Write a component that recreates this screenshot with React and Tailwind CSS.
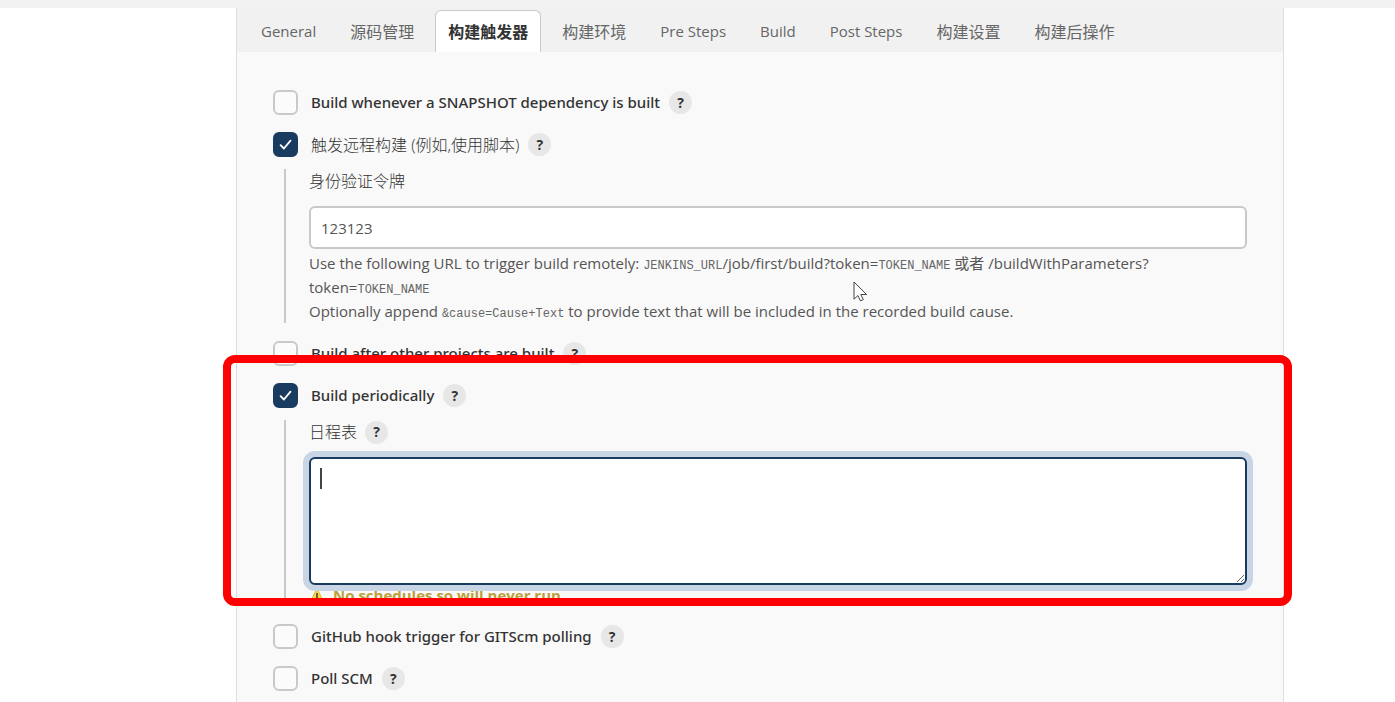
import React, { useState } from "react";

const tabs = [
  "General",
  "源码管理",
  "构建触发器",
  "构建环境",
  "Pre Steps",
  "Build",
  "Post Steps",
  "构建设置",
  "构建后操作",
];

const HelpButton = ({ label }) => (
  <button
    type="button"
    aria-label={`Help for ${label}`}
    className="w-[23px] h-[23px] rounded-full bg-[#e7e7e7] text-[#333] text-sm leading-none font-bold flex items-center justify-center"
  >
    ?
  </button>
);

const Trigger = ({ id, label, cjk, defaultChecked = false, children }) => {
  const [checked, setChecked] = useState(defaultChecked);

  return (
    <div>
      <div className="flex items-center h-[25px]">
        <span className="relative flex w-[25px] h-[25px]">
          <input
            id={id}
            type="checkbox"
            checked={checked}
            onChange={(e) => setChecked(e.target.checked)}
            className="appearance-none w-[25px] h-[25px] rounded-md border-2 border-[#c9c9c9] bg-[#fbfbfb] checked:bg-[#193b60] checked:border-[#193b60]"
          />
          {checked && (
            <svg
              viewBox="0 0 25 25"
              className="absolute inset-0 pointer-events-none"
              fill="none"
              stroke="#fff"
              strokeWidth="1.8"
              strokeLinecap="round"
              strokeLinejoin="round"
            >
              <path d="M7.6 13.2l3.3 3.3 6.6-7.9" />
            </svg>
          )}
        </span>
        <label
          htmlFor={id}
          className={
            "ml-[13px] mr-[9px] whitespace-nowrap " +
            (cjk
              ? "text-base font-light text-[#333]"
              : "font-['Noto_Sans','Open_Sans',sans-serif] text-[15px] font-medium text-[#333]")
          }
        >
          {label}
        </label>
        <HelpButton label={label} />
      </div>
      {checked && children && (
        <div className="mt-3 mb-px ml-[11px] pl-[23px] border-l-2 border-[#c9c9c9]">
          {children}
        </div>
      )}
    </div>
  );
};

const Code = ({ children }) => (
  <code className="font-['Liberation_Mono','Noto_Sans_CJK_SC',monospace] text-xs text-[#666]">
    {children}
  </code>
);

const App = () => {
  const [activeTab, setActiveTab] = useState("构建触发器");
  const [token, setToken] = useState("123123");

  return (
    <div className="relative min-h-screen overflow-hidden bg-white font-['Open_Sans','Noto_Sans_CJK_SC',sans-serif]">
      <div className="h-2 bg-[#f2f2f2]" />

      <main className="ml-[236px] mr-[111px] min-h-[calc(100vh-8px)] bg-[#f9f9f9] border-x border-[#dedede]">
        {/* Tabs */}
        <nav className="flex gap-2 h-11 pl-[11px] pt-0.5 bg-[#f1f1f1]">
          {tabs.map((tab) => (
            <button
              key={tab}
              type="button"
              onClick={() => setActiveTab(tab)}
              className={
                "px-3 border border-b-0 rounded-t-md whitespace-nowrap " +
                (/^[A-Z]/.test(tab) ? "text-[15px] " : "text-base ") +
                (activeTab === tab
                  ? "bg-white border-[#c9c9c9] text-[#333] font-bold"
                  : "border-transparent text-[#666]")
              }
            >
              {tab}
            </button>
          ))}
        </nav>

        {/* Build triggers */}
        <form className="flex flex-col gap-[17px] px-9 pt-[38px]">
          <Trigger id="snapshot" label="Build whenever a SNAPSHOT dependency is built" />

          <Trigger id="remote" label="触发远程构建 (例如,使用脚本)" cjk defaultChecked>
            <label
              htmlFor="token"
              className="block h-6 leading-6 text-base font-light text-[#333]"
            >
              身份验证令牌
            </label>
            <input
              id="token"
              type="text"
              value={token}
              onChange={(e) => setToken(e.target.value)}
              className="block mt-[13px] w-full h-[43px] px-[10px] rounded-md border-2 border-[#c9c9c9] bg-white text-[15px] text-[#555]"
            />
            <div className="mt-0.5 pr-20 text-[15px] leading-6 text-[#555]">
              <p>
                Use the following URL to trigger build remotely: <Code>JENKINS_URL</Code>
                /job/first/build?token=<Code>TOKEN_NAME</Code> 或者 /buildWithParameters?
                <wbr />
                token=<Code>TOKEN_NAME</Code>
              </p>
              <p>
                Optionally append <Code>&amp;cause=Cause+Text</Code> to provide text that
                will be included in the recorded build cause.
              </p>
            </div>
          </Trigger>

          <Trigger id="after" label="Build after other projects are built" />

          <Trigger id="periodic" label="Build periodically" defaultChecked>
            <div className="flex items-center gap-2 h-6">
              <label htmlFor="schedule" className="text-base font-light text-[#333]">
                日程表
              </label>
              <HelpButton label="日程表" />
            </div>
            <div className="relative mt-[13px]">
              <textarea
                id="schedule"
                className="block w-full h-32 px-[10px] py-2 rounded-md border-2 border-[#193b60] bg-white text-[15px] text-[#555] resize-y outline-none shadow-[0_0_0_6px_#c8d5e4]"
              />
              <span className="absolute left-[11px] top-[11px] w-0.5 h-[21px] bg-[#444] pointer-events-none" />
            </div>
            <p className="flex items-center gap-2 h-[21px] text-[15px] font-bold text-[#bd9f3b]">
              <svg viewBox="0 0 16 16" className="w-4 h-4">
                <path
                  d="M8 .6L15.4 15H.6z"
                  fill="#f4d84a"
                  stroke="#e0bb3a"
                  strokeLinejoin="round"
                />
                <path d="M8 5v5.5M8 12v1.3" stroke="#333" strokeWidth="1.4" />
              </svg>
              No schedules so will never run
            </p>
          </Trigger>

          <Trigger id="github" label="GitHub hook trigger for GITScm polling" />
          <Trigger id="scm" label="Poll SCM" />
        </form>
      </main>

      {/* Highlight frame */}
      <div className="absolute left-[223px] right-[103px] top-[355px] h-[251px] rounded-xl border-8 border-[#fe0000] pointer-events-none" />

      {/* Mouse pointer */}
      <svg
        viewBox="0 0 15 21"
        className="absolute left-[853px] top-[281px] w-[15px] h-[21px] pointer-events-none"
        fill="#fff"
        stroke="#444"
        strokeWidth="1"
        strokeLinejoin="round"
      >
        <path d="M1 1v17.2l3.9-3.6 2.6 5.3 2.8-1.3-2.5-5.1h5.8z" />
      </svg>
    </div>
  );
};

export default App;
